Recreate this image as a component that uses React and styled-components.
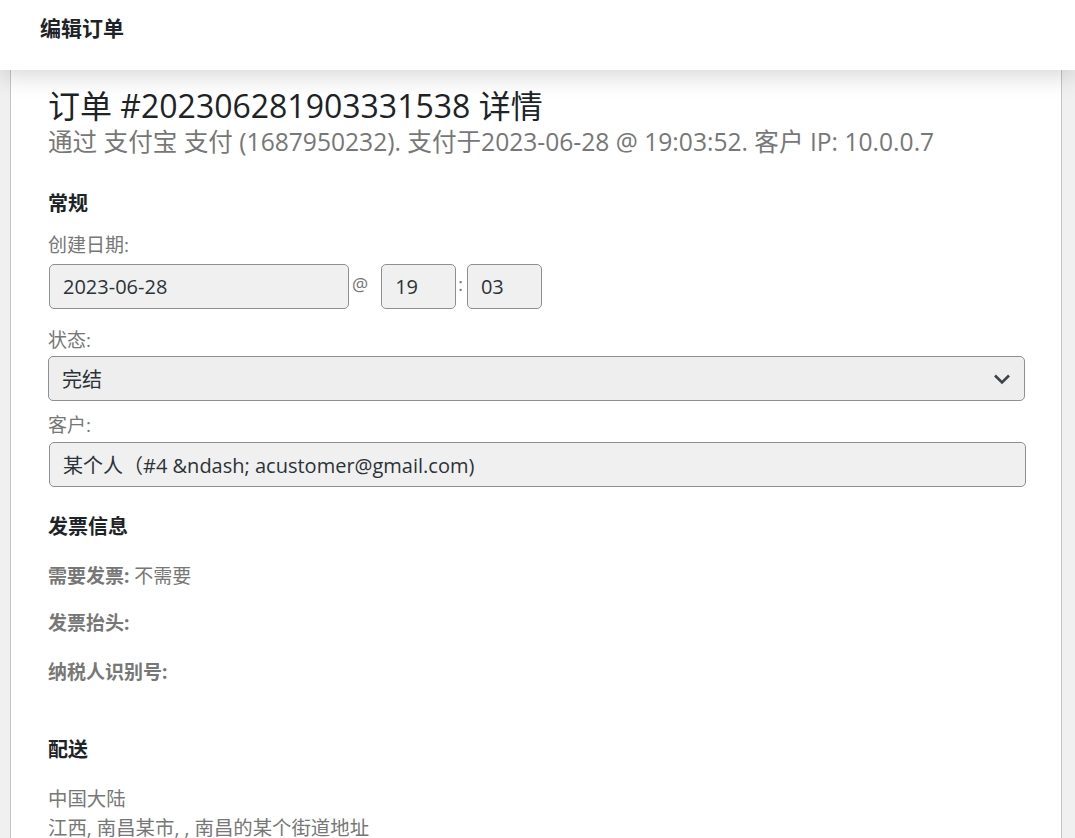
import React from 'react';
import styled, { createGlobalStyle } from 'styled-components';

const GlobalStyle = createGlobalStyle`
    html, body {
        margin: 0;
        padding: 0;
        background: #f0f0f1;
        font-family: "Open Sans", "Noto Sans CJK SC", sans-serif;
        overflow: hidden;
    }
`;

const Page = styled.div`
    width: 1075px;
    height: 838px;
    overflow: hidden;
    background: #f0f0f1;
`;

const Header = styled.header`
    position: relative;
    z-index: 2;
    height: 70px;
    background: #fff;
    display: flex;
    align-items: center;
    padding: 0 40px;
    box-shadow: 0 6px 24px rgba(0, 0, 0, 0.16);
`;

const HeaderTitle = styled.h1`
    margin: 0 0 16px;
    font-size: 21px;
    font-weight: 600;
    color: #1d2327;
`;

const Panel = styled.div`
    margin-left: 10px;
    width: 1052px;
    min-height: 800px;
    background: #fff;
    border-left: 1px solid #c3c4c7;
    border-right: 1px solid #c3c4c7;
    padding: 14px 20px 0 37px;
    box-sizing: border-box;
`;

const Title = styled.h2`
    margin: 0;
    font-size: 32px;
    font-weight: 400;
    line-height: 44px;
    color: #1d2327;
`;

const Meta = styled.p`
    margin: 0;
    font-size: 24.6px;
    line-height: 28px;
    color: #777;
`;

const SectionTitle = styled.h3`
    margin: ${(p) => p.$top || 30}px 0 0;
    font-size: 20px;
    font-weight: 700;
    line-height: 28px;
    color: #1d2327;
`;

const Label = styled.label`
    display: block;
    margin-top: ${(p) => p.$top || 8}px;
    font-size: 19px;
    line-height: 26px;
    color: #777;
`;

const Row = styled.div`
    display: flex;
    align-items: flex-start;
    margin-top: ${(p) => p.$top || 4}px;
`;

const Field = styled.div`
    box-sizing: border-box;
    flex: none;
    width: ${(p) => p.$width};
    height: 45px;
    margin-left: ${(p) => p.$left || 0}px;
    border: 1px solid #8c8f94;
    border-radius: 5px;
    background: ${(p) => p.$bg || '#f0f0f0'};
    display: flex;
    align-items: center;
    justify-content: space-between;
    padding: 0 13px;
    font-size: 20px;
    color: #2c3338;
`;

const Sep = styled.span`
    font-size: 18px;
    line-height: 20px;
    color: #777;
    margin: 10px 0 0 ${(p) => p.$left || 2}px;
`;

const InfoLine = styled.p`
    margin: ${(p) => p.$top || 21}px 0 0;
    font-size: 19px;
    line-height: 26px;
    color: #777;

    strong {
        font-weight: 700;
    }
`;

const Address = styled.p`
    margin: 20px 0 0;
    font-size: 19.4px;
    line-height: 29px;
    color: #777;
`;

const Chevron = () => (
    <svg width="18" height="12" viewBox="0 0 18 12" fill="none">
        <path d="M2 2.5 L9 9.5 L16 2.5" stroke="#3c434a" strokeWidth="2.6" />
    </svg>
);

const App = () => {
    return (
        <Page>
            <GlobalStyle />
            <Header>
                <HeaderTitle>编辑订单</HeaderTitle>
            </Header>
            <Panel>
                <Title>订单 #202306281903331538 详情</Title>
                <Meta>通过 支付宝 支付 (1687950232). 支付于2023-06-28 @ 19:03:52. 客户 IP: 10.0.0.7</Meta>

                <SectionTitle $top={34}>常规</SectionTitle>
                <Label $top={14}>创建日期:</Label>
                <Row $top={6}>
                    <Field $width="300px" $left={1}>2023-06-28</Field>
                    <Sep $left={3}>@</Sep>
                    <Field $width="75px" $left={13}>19</Field>
                    <Sep $left={2}>:</Sep>
                    <Field $width="75px" $left={4}>03</Field>
                </Row>

                <Label $top={18}>状态:</Label>
                <Row $top={3}>
                    <Field $width="977px" $bg="#eeeeee">
                        完结
                        <Chevron />
                    </Field>
                </Row>

                <Label $top={11}>客户:</Label>
                <Row $top={4}>
                    <Field $width="977px" $left={1}>某个人（#4 &amp;ndash; acustomer@gmail.com)</Field>
                </Row>

                <SectionTitle $top={26}>发票信息</SectionTitle>
                <InfoLine $top={22}><strong>需要发票:</strong> 不需要</InfoLine>
                <InfoLine><strong>发票抬头:</strong></InfoLine>
                <InfoLine $top={23}><strong>纳税人识别号:</strong></InfoLine>

                <SectionTitle $top={51}>配送</SectionTitle>
                <Address>
                    中国大陆
                    <br />
                    江西, 南昌某市, , 南昌的某个街道地址
                </Address>
            </Panel>
        </Page>
    );
};

export default App;
